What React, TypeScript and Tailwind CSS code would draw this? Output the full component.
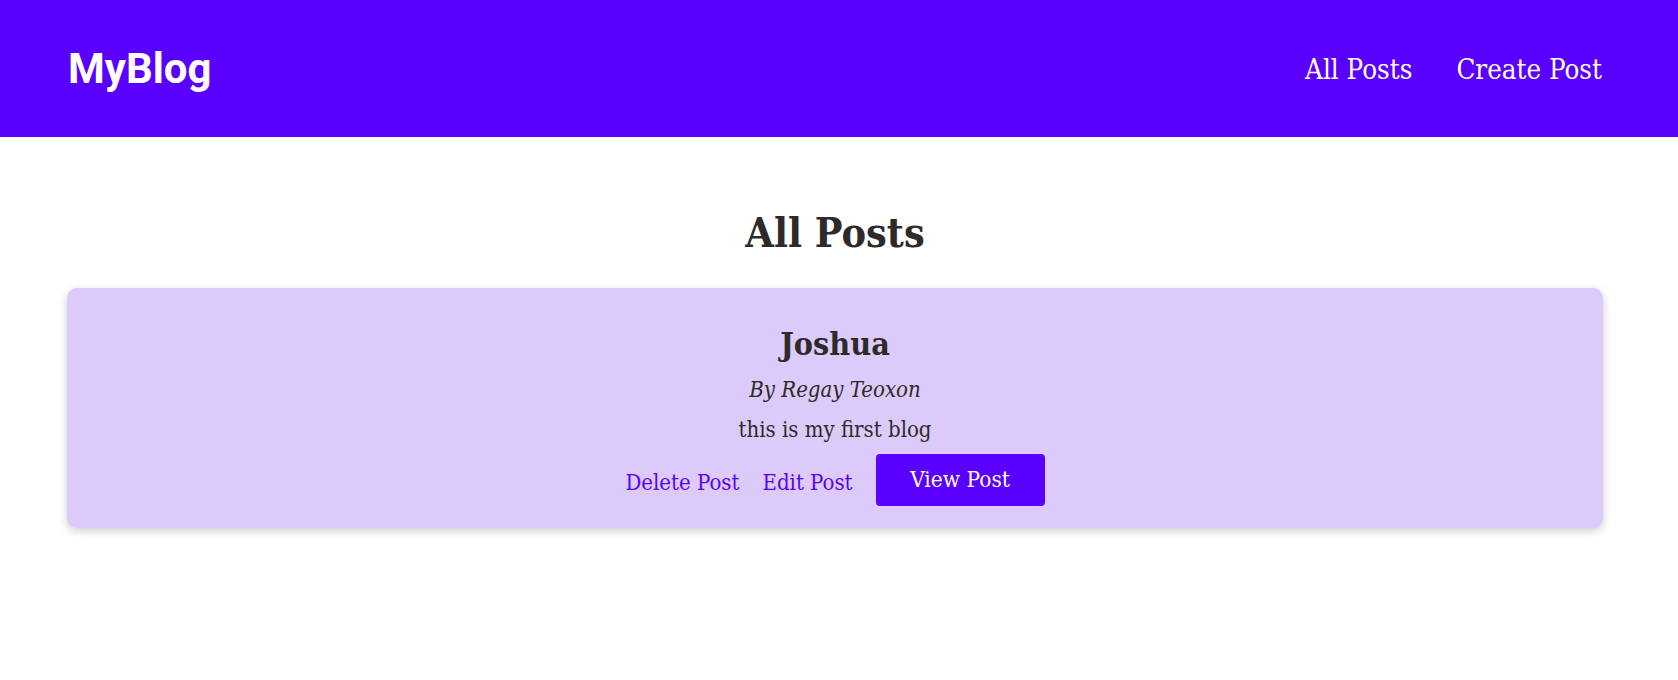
import React from 'react';

const slab = { fontFamily: '"DejaVu Serif Condensed", "DejaVu Serif", serif' };

type Post = { title: string; author: string; body: string };

const posts: Post[] = [{ title: 'Joshua', author: 'Regay Teoxon', body: 'this is my first blog' }];

const PostCard: React.FC<{ post: Post }> = ({ post }) => (
    <div className="bg-[#dccbfa] rounded-[10px] shadow-[0_3px_10px_rgba(0,0,0,0.2)] pt-[38px] pb-[22px] flex flex-col items-center text-[#2e2a2a]">
        <h3 className="text-[32px] leading-[36px] font-bold">{post.title}</h3>
        <p className="mt-[12px] text-[22px] leading-[32px] italic">By {post.author}</p>
        <p className="mt-[8px] text-[22px] leading-[32px]">{post.body}</p>
        <div className="mt-[8px] flex items-center gap-[23px] text-[22px]">
            <a className="mt-[4px] text-[#5a00ff] cursor-pointer">Delete Post</a>
            <a className="mt-[4px] text-[#5a00ff] cursor-pointer">Edit Post</a>
            <button className="bg-[#5a00ff] text-white text-[22.5px] rounded-[4px] h-[52px] w-[169px]">View Post</button>
        </div>
    </div>
);

export default function App() {
    return (
        <div className="min-h-[680px] bg-white" style={slab}>
            <header className="h-[137px] bg-[#5a00ff] flex items-center justify-between pl-[68px] pr-[76px] text-white">
                <h1 className="text-[42px] font-bold" style={{ fontFamily: 'Roboto, sans-serif' }}>MyBlog</h1>
                <nav className="mt-[2px] flex items-center gap-[44px] text-[27.5px]">
                    <a className="cursor-pointer">All Posts</a>
                    <a className="cursor-pointer">Create Post</a>
                </nav>
            </header>
            <main className="pl-[67px] pr-[75px]">
                <h2 className="mt-[70px] text-center text-[41px] leading-[52px] font-bold text-[#2e2a2a]">All Posts</h2>
                <div className="mt-[29px] space-y-6">
                    {posts.map(p => (
                        <PostCard key={p.title} post={p} />
                    ))}
                </div>
            </main>
        </div>
    );
}
